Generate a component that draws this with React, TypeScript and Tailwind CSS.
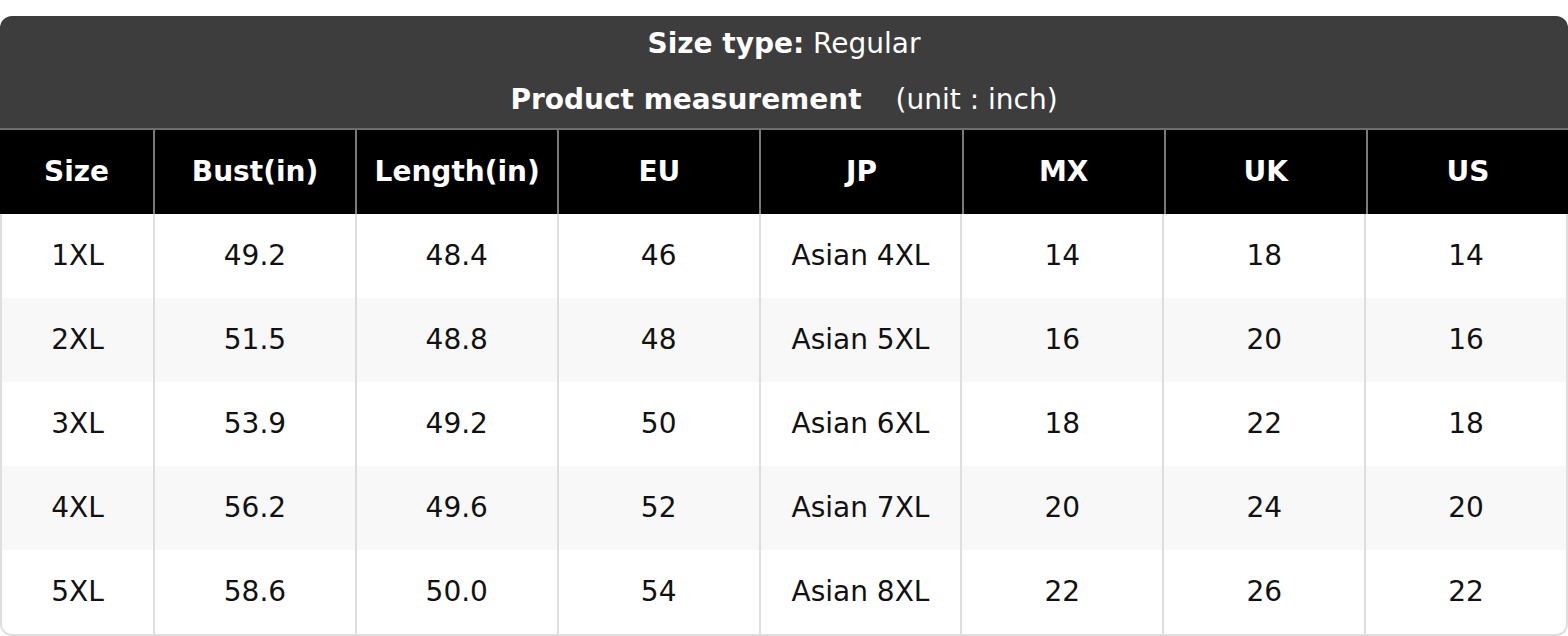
const columns = ['Size', 'Bust(in)', 'Length(in)', 'EU', 'JP', 'MX', 'UK', 'US'];

const rows: string[][] = [
    ['1XL', '49.2', '48.4', '46', 'Asian 4XL', '14', '18', '14'],
    ['2XL', '51.5', '48.8', '48', 'Asian 5XL', '16', '20', '16'],
    ['3XL', '53.9', '49.2', '50', 'Asian 6XL', '18', '22', '18'],
    ['4XL', '56.2', '49.6', '52', 'Asian 7XL', '20', '24', '20'],
    ['5XL', '58.6', '50.0', '54', 'Asian 8XL', '22', '26', '22'],
];

export default function App() {
    return (
        <div
            className="bg-white pt-4 w-[1568px] text-[28px]"
            style={{ fontFamily: '"DejaVu Sans", Verdana, sans-serif' }}
        >
            <div className="rounded-t-[12px] overflow-hidden">
                <div className="bg-[#3d3d3d] text-white h-[112px] pt-[11px] flex flex-col items-center gap-[22px]">
                    <div className="h-[34px] leading-[34px]">
                        <span className="font-bold">Size type:</span> Regular
                    </div>
                    <div className="h-[34px] leading-[34px]">
                        <span className="font-bold">Product measurement</span>
                        <span className="ml-[34px]">(unit : inch)</span>
                    </div>
                </div>
                <div className="border-t-2 border-[#6e6e6e] bg-black grid grid-cols-[153px_repeat(7,1fr)] h-[86px]">
                    {columns.map((col, i) => (
                        <div
                            key={col}
                            className={`flex items-center justify-center font-bold text-white ${i > 0 ? 'border-l-2 border-[#7a7a7a]' : ''}`}
                        >
                            {col}
                        </div>
                    ))}
                </div>
            </div>
            <div className="border-x-2 border-b-2 border-[#dedede] rounded-b-[12px] overflow-hidden">
                {rows.map((row, r) => (
                    <div
                        key={row[0]}
                        className={`grid grid-cols-[151px_repeat(7,1fr)] h-[84px] ${r % 2 === 1 ? 'bg-[#f8f8f8]' : 'bg-white'}`}
                    >
                        {row.map((cell, i) => (
                            <div
                                key={i}
                                className={`flex items-center justify-center text-[#111] ${i > 0 ? 'border-l-2 border-[#dedede]' : ''}`}
                            >
                                {cell}
                            </div>
                        ))}
                    </div>
                ))}
            </div>
        </div>
    );
}
